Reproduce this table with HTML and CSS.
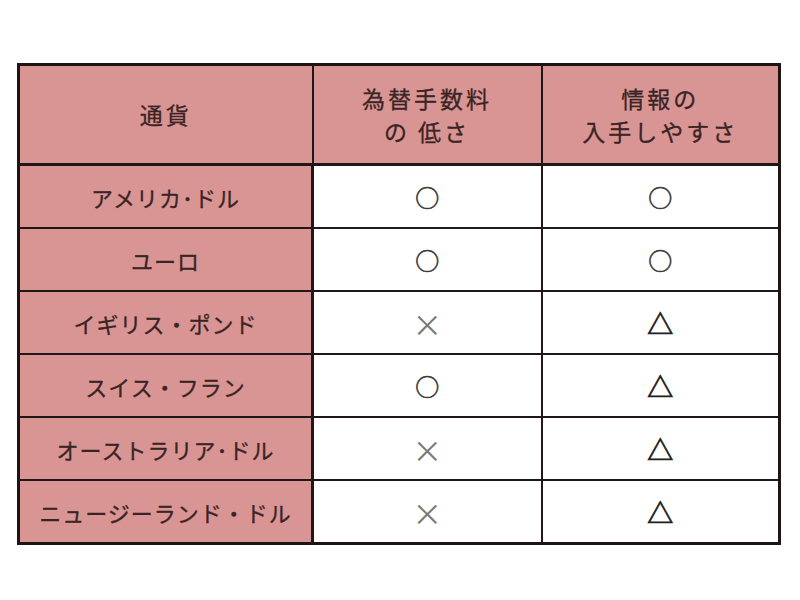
FILE: index.html
```html
<!DOCTYPE html>
<html lang="ja">
<head>
<meta charset="utf-8">
<link rel="stylesheet" href="styles.css">
</head>
<body>
<table class="fx">
  <colgroup>
    <col class="c1"><col class="c2"><col class="c3">
  </colgroup>
  <thead>
    <tr class="head">
      <th>通貨</th>
      <th>為替手数料<br>の 低さ</th>
      <th>情報の<br>入手しやすさ</th>
    </tr>
  </thead>
  <tbody>
    <tr><th>アメリカ･ドル</th><td class="mk">○</td><td class="mk">○</td></tr>
    <tr><th>ユーロ</th><td class="mk">○</td><td class="mk">○</td></tr>
    <tr><th>イギリス・ポンド</th><td class="mk x">×</td><td class="mk t">△</td></tr>
    <tr><th>スイス・フラン</th><td class="mk">○</td><td class="mk t">△</td></tr>
    <tr><th>オーストラリア･ドル</th><td class="mk x">×</td><td class="mk t">△</td></tr>
    <tr><th>ニュージーランド・ドル</th><td class="mk x">×</td><td class="mk t">△</td></tr>
  </tbody>
</table>
</body>
</html>
```

FILE: styles.css
```css
html, body {
  margin: 0;
  padding: 0;
  background: #ffffff;
}
body {
  padding: 63px 0 0 17px;
  font-family: "Noto Sans CJK JP", "Noto Sans", sans-serif;
  color: #3a2424;
}
.fx {
  border-collapse: collapse;
  border: 3px solid #1e1414;
  width: 761px;
  table-layout: fixed;
}
.c1 { width: 294px; }
.c2 { width: 229px; }
.c3 { width: 238px; }
.fx th, .fx td {
  border: 2px solid #201818;
  text-align: center;
  vertical-align: middle;
  padding: 0;
  height: 61px;
  font-weight: 400;
}
.fx th {
  background: #d99594;
  font-size: 22px;
  letter-spacing: 1px;
  -webkit-text-stroke: 0.3px #3a2424;
}
.head th {
  height: 97px;
  border-bottom-width: 3px;
  font-size: 23px;
  line-height: 33px;
  letter-spacing: 3px;
}
.fx tbody th {
  border-right-width: 3px;
}
.mk {
  font-size: 24px;
  color: #3a3a3a;
  background: #ffffff;
  -webkit-text-stroke: 0.6px #3a3a3a;
}
.mk.x {
  font-size: 30px;
  color: #7a7a7a;
  -webkit-text-stroke: 0;
}
.mk.t {
  font-size: 26px;
  color: #222222;
  -webkit-text-stroke: 0.8px #222222;
}
```
